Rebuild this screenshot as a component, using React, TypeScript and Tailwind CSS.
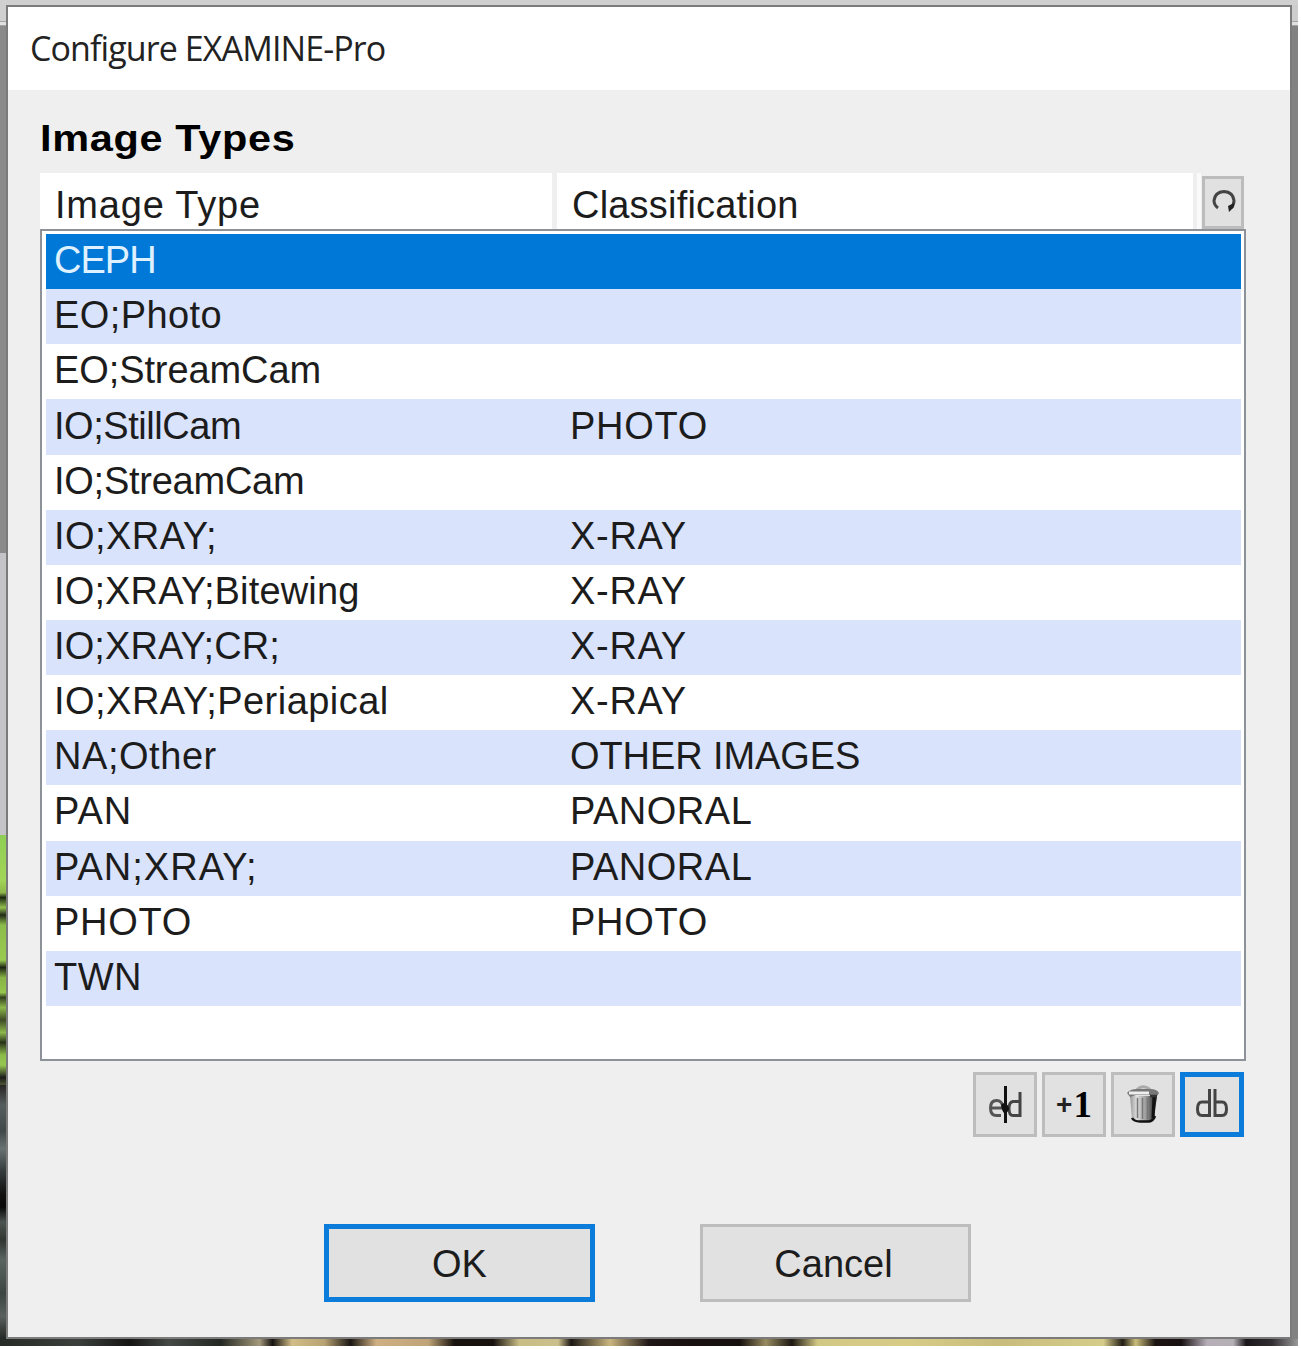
import type { ReactNode } from 'react';

type Row = { type: string; typeClass: string; cls?: string; clsClass?: string };

const rows: Row[] = [
  { type: 'CEPH', typeClass: 'tracking-[-1px]' },
  { type: 'EO;Photo', typeClass: 'tracking-[0.4px]' },
  { type: 'EO;StreamCam', typeClass: 'tracking-[-0.1px]' },
  { type: 'IO;StillCam', typeClass: 'tracking-[-0.45px]', cls: 'PHOTO', clsClass: 'tracking-[0.75px]' },
  { type: 'IO;StreamCam', typeClass: 'tracking-[-0.25px]' },
  { type: 'IO;XRAY;', typeClass: 'tracking-[0.45px]', cls: 'X-RAY', clsClass: 'tracking-[0.7px]' },
  { type: 'IO;XRAY;Bitewing', typeClass: 'tracking-[0.15px]', cls: 'X-RAY', clsClass: 'tracking-[0.7px]' },
  { type: 'IO;XRAY;CR;', typeClass: 'tracking-[0.1px]', cls: 'X-RAY', clsClass: 'tracking-[0.7px]' },
  { type: 'IO;XRAY;Periapical', typeClass: 'tracking-[0.47px]', cls: 'X-RAY', clsClass: 'tracking-[0.7px]' },
  { type: 'NA;Other', typeClass: 'tracking-[0.55px]', cls: 'OTHER IMAGES', clsClass: 'tracking-[-0.1px]' },
  { type: 'PAN', typeClass: 'tracking-[1px]', cls: 'PANORAL', clsClass: 'tracking-[0.5px]' },
  { type: 'PAN;XRAY;', typeClass: 'tracking-[1px]', cls: 'PANORAL', clsClass: 'tracking-[0.5px]' },
  { type: 'PHOTO', typeClass: 'tracking-[0.75px]', cls: 'PHOTO', clsClass: 'tracking-[0.75px]' },
  { type: 'TWN', typeClass: 'tracking-[0.5px] indent-[2px]' },
];

function ToolButton({ label, active, children }: { label: string; active?: boolean; children: ReactNode }) {
  return (
    <button
      aria-label={label}
      className={
        active
          ? 'flex h-[65px] w-[64px] items-center justify-center border-[5px] border-[#0b7cda] bg-[#e1e1e1]'
          : 'flex h-[65px] w-[64px] items-center justify-center border-[3px] border-[#bdbdbd] bg-[#e1e1e1]'
      }
    >
      {children}
    </button>
  );
}

function EditIcon() {
  return (
    <svg width="40" height="44" viewBox="0 0 40 44" className="shrink-0" fill="none" stroke="#222" strokeWidth="3">
      <path d="M5 25H18M18 24Q17 17.500 11.500 17.500Q5.500 17.500 5.500 25Q5.500 32.500 11.500 32.500H16" stroke="#555" />
      <path d="M20.500 3V40" stroke="#111" />
      <path d="M35 9V34M35 18.500H28Q24 19 24 25.500Q24 32.500 28 32.500H35" stroke="#444" />
      <path d="M16 22Q18 19 20.500 21Q24 22 24 26Q23 30 19 30Q17 28 16 22Z" fill="#111" stroke="none" />
    </svg>
  );
}

function DatabaseIcon() {
  return (
    <svg width="40" height="44" viewBox="0 0 40 44" className="shrink-0" fill="none" stroke="#444" strokeWidth="3">
      <path d="M17.500 6V34M17.500 19H10Q5.500 19 5.500 26Q5.500 32.500 10 32.500H17.500" />
      <path d="M23 6V34M23 19H30Q34.500 19 34.500 26Q34.500 32.500 30 32.500H23" />
    </svg>
  );
}

function TrashIcon() {
  return (
    <svg width="40" height="44" viewBox="0 0 40 44" className="shrink-0" fill="none">
      <defs>
        <linearGradient id="can" x1="0" x2="1">
          <stop offset="0" stopColor="#999" />
          <stop offset="0.25" stopColor="#ddd" />
          <stop offset="0.6" stopColor="#999" />
          <stop offset="0.8" stopColor="#555" />
          <stop offset="1" stopColor="#111" />
        </linearGradient>
      </defs>
      <path d="M7 13H34L31 36Q30 39 25 39H14Q10 39 9 36Z" fill="url(#can)" />
      <path d="M9 35Q11 38.500 17 38.500H25Q30 38.500 32 33" stroke="#111" strokeWidth="2.500" />
      <path d="M14.500 15V35M19.500 15V36M24.500 15V36" stroke="#777" strokeWidth="1.500" />
      <path d="M31 14L30 35" stroke="#111" strokeWidth="3" />
      <path d="M14 6.500Q20 1 27 6.500" stroke="#aaa" strokeWidth="3" />
      <path d="M4 10Q7 6 14 6H27Q34 6 36 10L34 13H29L27 12H13L7 14Z" fill="#777" />
      <path d="M6 10H26" stroke="#eee" strokeWidth="3" />
      <path d="M27 13H34" stroke="#333" strokeWidth="2.500" />
    </svg>
  );
}

export default function App() {
  return (
    <div className="h-[1349px] w-[1301px] overflow-hidden bg-white font-['Liberation_Sans',Arial,sans-serif] text-[38px] text-[#1c1c1c]">
      <div className="flex h-[1346px] w-[1298px] flex-col bg-[#808080]">
        <div className="h-[5px] shrink-0 bg-[#d0d0d0]" />
        <div className="flex h-[1334px] shrink-0">
          <div className="flex w-[6px] shrink-0 flex-col">
            <div className="h-[16px] bg-[#d0d0d0]" />
            <div className="h-[5px] border-y border-[#a4a4a4] bg-[#e0e0e0]" />
            <div className="h-[527px] bg-[#8a8a8a]" />
            <div className="h-[282px] bg-[#c3c3c8]" />
            <div className="h-[250px] bg-[linear-gradient(180deg,#8fce55_0%,#a2d557_18%,#8fb94b_23%,#1c2911_25%,#91be4e_29%,#222b17_32%,#8bbc49_36%,#9acb50_50%,#1c2414_53%,#88b347_57%,#95c64d_63%,#35421f_65%,#8cb84a_69%,#3d4b24_74%,#8db74a_79%,#29331a_83%,#8cbc48_88%,#97c753_92%,#1b1b18_97%,#4b5534_100%)]" />
            <div className="h-[254px] bg-[linear-gradient(180deg,#292625_0%,#555d5e_8%,#41484a_18%,#697273_25%,#343a3b_34%,#111110_43%,#090909_48%,#4b5350_54%,#303530_61%,#596461_69%,#3c4542_82%,#59605e_91%,#242825_100%)]" />
          </div>
          <main className="flex w-[1286px] shrink-0 flex-col border-2 border-[#7b7b7b] bg-[#efefef]">
            <header className="flex h-[83px] shrink-0 items-center bg-white pl-[22px] font-['Open_Sans','Noto_Sans',sans-serif] text-[34px] text-[#222]">
              <h1 className="whitespace-nowrap tracking-[-0.9px]">Configure EXAMINE-Pro</h1>
            </header>
            <section className="flex flex-col px-[32px] pt-[24px]">
              <h2 className="h-[59px] origin-left scale-x-[1.12] whitespace-nowrap text-[37px] font-bold leading-[49px] tracking-[0.6px] text-black">Image Types</h2>
              <div className="flex h-[56px] w-[1206px]">
                <div className="flex w-[512px] items-center bg-white pl-[15px] pt-[8px] tracking-[0.8px]">Image Type</div>
                <div className="ml-[5px] flex w-[636px] items-center bg-white pl-[15px] pt-[8px] tracking-[0.2px]">Classification</div>
                <div className="ml-[4px] w-[4px] bg-[#fafafa]" />
                <button aria-label="Refresh" className="ml-px mt-[3px] flex h-[53px] w-[42px] items-center justify-center border-[3px] border-[#bcbcbc] bg-[#e1e1e1]">
                  <svg width="28" height="30" viewBox="0 0 28 30" fill="none" className="shrink-0">
                    <path d="M9 20Q5 17 5 12.500Q6 4 15 3.500Q24 4 25 12.500Q25 17 22 20" stroke="#444" strokeWidth="3" />
                    <path d="M19 18L25 15L25 19L20 24Z" fill="#222" />
                  </svg>
                </button>
              </div>
              <div className="flex h-[832px] w-[1206px] flex-col border-2 border-[#8d9299] bg-white py-[3px] pl-[4px] pr-[3px]">
                {rows.map((r, i) => (
                  <div
                    key={r.type}
                    className={
                      i === 0
                        ? 'flex h-[55.15px] shrink-0 items-center bg-[#0078d7] pb-[2px] text-[#dff0ff]'
                        : i % 2
                          ? 'flex h-[55.15px] shrink-0 items-center bg-[#dae3fc] pb-[2px]'
                          : 'flex h-[55.15px] shrink-0 items-center bg-white pb-[2px]'
                    }
                  >
                    <span className="w-[516px] shrink-0 whitespace-nowrap pl-[8px]">
                      <span className={r.typeClass}>{r.type}</span>
                    </span>
                    <span className="whitespace-nowrap pl-[8px]">
                      <span className={r.clsClass}>{r.cls}</span>
                    </span>
                  </div>
                ))}
              </div>
              <div className="mt-[11px] flex w-[1204px] justify-end gap-[5px]">
                <ToolButton label="Edit"><EditIcon /></ToolButton>
                <ToolButton label="Add">
                  <span className="flex items-center gap-px text-black">
                    <span className="font-['Liberation_Sans'] text-[28px] font-bold text-[#222]">+</span>
                    <span className="font-['Liberation_Serif',serif] text-[37px] font-bold">1</span>
                  </span>
                </ToolButton>
                <ToolButton label="Delete"><TrashIcon /></ToolButton>
                <ToolButton label="Database" active><DatabaseIcon /></ToolButton>
              </div>
              <div className="mt-[87px] flex gap-[105px] pl-[284px]">
                <button className="h-[78px] w-[271px] border-[5px] border-[#0b7cda] bg-[#e1e1e1] pt-[2px]">OK</button>
                <button className="h-[78px] w-[271px] border-[3px] border-[#bdbdbd] bg-[#e1e1e1] pr-[4px] pt-[2px]">Cancel</button>
              </div>
            </section>
          </main>
          <div className="w-[6px] shrink-0">
            <div className="h-[16px] bg-[#cdcdcd]" />
            <div className="h-[5px] border-y border-[#a4a4a4] bg-[#e0e0e0]" />
            <div className="h-[1313px] bg-[#828282]" />
          </div>
        </div>
        <div className="h-[7px] shrink-0 bg-[linear-gradient(90deg,#262b26_0%,#3b403c_6%,#151513_10%,#444946_13%,#242822_17%,#a3987b_20%,#161310_21%,#d1bd87_22.500%,#b8a273_25%,#1b1713_27%,#cfb083_29%,#bfa477_33%,#18130e_35%,#17120e_38%,#c9bd85_40%,#cbc08c_43%,#1d1815_44%,#c9b57e_47%,#201717_50%,#17100f_53%,#16100f_57%,#978b60_59%,#1c1712_61%,#d2c885_63%,#d7cc86_70%,#c7bc7c_77%,#d6cc8a_85%,#221d15_86.500%,#cabd7a_87.500%,#1c1411_89%,#171011_91%,#b6aeb7_93%,#b5b0b5_95%,#191519_96%,#322d31_98%,#999_100%)]" />
      </div>
    </div>
  );
}
